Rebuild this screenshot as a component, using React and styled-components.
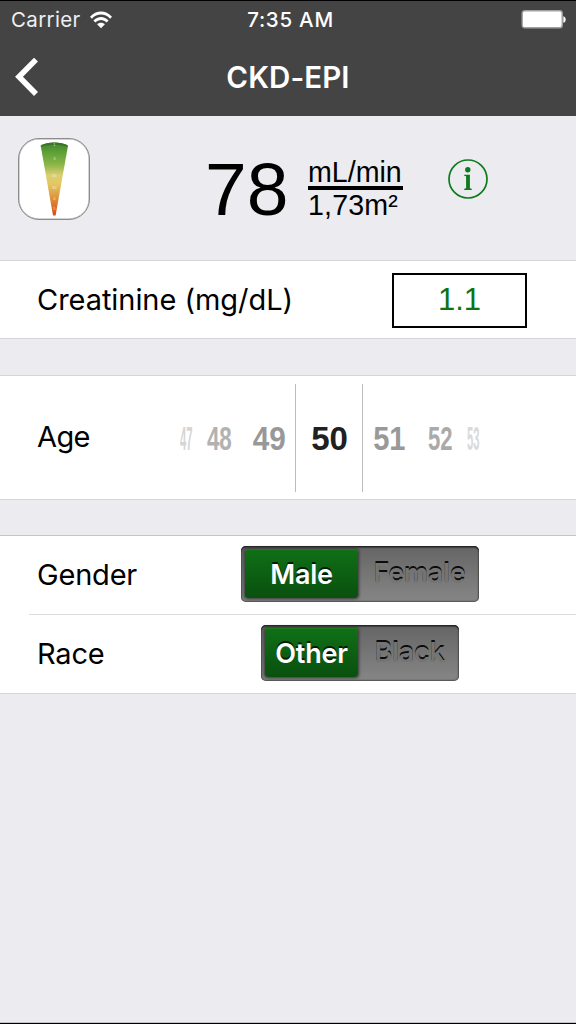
import React from 'react';
import styled, { createGlobalStyle } from 'styled-components';

const GlobalStyle = createGlobalStyle`
  * { box-sizing: border-box; }
  html, body { margin: 0; padding: 0; background: #ebebf0; }
`;

const Screen = styled.main`
  width: 576px;
  height: 1024px;
  display: flex;
  flex-direction: column;
  background: #ebebf0;
  border-bottom: 1px solid #000;
  box-shadow: inset 0 -1px 0 #c4c4c8;
  color: #000;
  font-family: Inter, "Liberation Sans", sans-serif;
  overflow: hidden;
`;

const Header = styled.header`
  height: 116px;
  flex: none;
  background: #444445;
  border-top: 1px solid #000;
  color: #fff;
`;

const StatusBar = styled.div`
  display: grid;
  grid-template-columns: 1fr auto 1fr;
  align-items: center;
  height: 37px;
  padding: 0 10px 0 11px;
  font-size: 20.5px;
  line-height: 37px;
`;

const Carrier = styled.div`
  display: flex;
  align-items: center;
  gap: 9px;
  color: #f0f0f0;
  letter-spacing: 0.35px;
`;

const Clock = styled.div`
  font-weight: 500;
  letter-spacing: 0.75px;
  padding-left: 4px;
`;

const Battery = styled.svg`
  justify-self: end;
  display: block;
`;

const NavBar = styled.nav`
  display: grid;
  grid-template-columns: 60px 1fr 60px;
  align-items: center;
  height: 78px;
`;

const BackButton = styled.button`
  border: 0;
  background: none;
  padding: 0 0 0 15px;
  height: 78px;
  display: flex;
  align-items: center;
`;

const Title = styled.h1`
  margin: 0;
  text-align: center;
  font-size: 29.5px;
  font-weight: 600;
  letter-spacing: 0.1px;
`;

const Summary = styled.section`
  display: flex;
  align-items: flex-start;
  height: 144px;
  flex: none;
  padding: 22px 0 0 18px;
  font-family: "Liberation Sans", Arial, sans-serif;
`;

const AppIcon = styled.div`
  width: 72px;
  height: 82px;
  border: 1px solid #8c8c8c;
  box-shadow: inset 0 0 0 0.5px #a8a8a8;
  border-radius: 21px;
  background: #fff;
  overflow: hidden;
`;

const Result = styled.output`
  margin: 9px 0 0 115px;
  width: 84px;
  font-size: 75px;
  line-height: 84px;
`;

const Unit = styled.div`
  margin: 18px 0 0 19px;
  width: 95px;
  display: flex;
  flex-direction: column;
  font-size: 28.6px;
  line-height: 32px;
  white-space: nowrap;
`;

const Numerator = styled.span`
  height: 34px;
  border-bottom: 4px solid #000;
  line-height: 32px;
`;

const Denominator = styled.span`
  height: 32px;
  line-height: 30px;
  letter-spacing: 0.15px;
`;

const InfoButton = styled.button`
  margin: 21px 0 0 45px;
  width: 40px;
  height: 40px;
  padding: 0;
  border: 0;
  background: none;
`;

const Group = styled.section`
  flex: none;
  margin-bottom: ${({ $gap }) => $gap || 0}px;
  background: #fff;
  border-top: 1px solid ${({ $edge }) => $edge || '#d6d6da'};
  border-bottom: 1px solid #d6d6da;
`;

const Row = styled.div`
  display: flex;
  align-items: center;
  height: ${({ $height }) => $height}px;
  padding-left: 37px;
`;

const Divider = styled.hr`
  margin: 0 0 0 29px;
  border: 0;
  height: 1px;
  background: #dcdcde;
`;

const Label = styled.label`
  margin-top: ${({ $top }) => $top ?? -1}px;
  font-size: 29px;
  line-height: 36px;
  letter-spacing: ${({ $spacing }) => $spacing || '-0.2px'};
  width: ${({ $width }) => $width}px;
  white-space: nowrap;
`;

const ValueField = styled.div`
  width: 135px;
  height: 55px;
  margin-top: 2px;
  border: 2px solid #000;
  color: #0d7415;
  text-align: center;
  font-family: "Liberation Sans", Arial, sans-serif;
  font-size: 31px;
  line-height: 50px;
`;

const Picker = styled.div`
  display: flex;
  align-items: center;
  height: 108px;
  font-family: "Liberation Sans", Arial, sans-serif;
  font-size: 33px;
  font-weight: 700;
`;

const PickerSlot = styled.div`
  flex: none;
  width: ${({ $width }) => $width}px;
  padding-left: ${({ $lead }) => $lead || 0}px;
  display: flex;
  justify-content: center;
  height: 108px;
  line-height: 110px;
  color: ${({ $tone }) => $tone};
  border: 0 solid #bcbcbc;
  border-width: ${({ $selected }) => ($selected ? '0 1.5px' : '0')};
`;

const Digits = styled.span`
  flex: none;
  transform: scaleX(${({ $squeeze }) => $squeeze});
`;

const Segmented = styled.div`
  display: flex;
  align-items: flex-start;
  width: ${({ $width }) => $width}px;
  height: 56px;
  margin-bottom: 2px;
  padding: 3px 3px 3px 4px;
  border-radius: 5px;
  background: linear-gradient(#656565, #868686);
  box-shadow: inset 0 1.5px 1px #242424, inset 0 0 1.5px 1px #505050;
  font-size: 27px;
`;

const ActiveSegment = styled.div`
  width: ${({ $width }) => $width}px;
  height: 49px;
  border-radius: 3px;
  background: linear-gradient(#107016, #09500f);
  box-shadow: 0 0 3px 1px #383838, inset 0 1px 0 #1d7b20;
  color: #fff;
  text-align: center;
  font-weight: 600;
  line-height: 51px;
  letter-spacing: -0.2px;
  text-shadow: 0 -2px 0.5px #001c03;
`;

const InactiveSegment = styled.div`
  flex: 1;
  height: 49px;
  padding-left: ${({ $offset }) => $offset || 0}px;
  text-align: center;
  line-height: 49px;
  font-weight: 600;
  letter-spacing: -0.3px;
  color: #747474;
  text-shadow: 0 -2px 0 #0c0c0c;
`;

const picker = [
  { value: 47, width: 25, tone: '#d6d6d6', squeeze: 0.34 },
  { value: 48, width: 41, tone: '#b2b2b2', squeeze: 0.68 },
  { value: 49, width: 55, tone: '#989898', squeeze: 0.9, lead: 4 },
  { value: 50, width: 68, tone: '#202020', squeeze: 1, selected: true, lead: 1 },
  { value: 51, width: 53, tone: '#999999', squeeze: 0.88 },
  { value: 52, width: 49, tone: '#aaaaaa', squeeze: 0.67 },
  { value: 53, width: 17, tone: '#dadada', squeeze: 0.34 },
];

function WifiIcon() {
  return (
    <svg width="22" height="18" viewBox="0 0 22 18" fill="#fff">
      <path d="M0 5.7C6.2-1.2 15.8-1.2 22 5.7L20.1 7.7C15 2.1 7 2.1 1.9 7.7Z" />
      <path d="M3.4 9.5C7.8 4.8 14.2 4.8 18.6 9.5L16.7 11.5C13.4 8.1 8.6 8.1 5.3 11.5Z" />
      <path d="M7.1 13.2C9.3 11.2 12.7 11.2 14.9 13.2L11 17.2Z" />
    </svg>
  );
}

function BatteryIcon() {
  return (
    <Battery width="45" height="19" viewBox="0 0 45 19">
      <rect x="1.2" y="0.8" width="40" height="17" rx="2.5" fill="#fff" stroke="#a1a1a1" strokeWidth="1.4" />
      <path d="M42.3 6.2C45.5 6.7 45.5 12.3 42.3 12.8Z" fill="#fff" />
    </Battery>
  );
}

function GaugeIcon() {
  const marks = [[4.5, 1], [18, 3], [35.3, 15], [47, 30], [58.5, 4], [68.5, 5]];
  return (
    <svg width="70" height="80" viewBox="0 0 70 80" style={{ display: 'block' }}>
      <defs>
        <linearGradient id="gauge" x1="0" y1="0" x2="0" y2="1">
          <stop offset="0" stopColor="#44832e" />
          <stop offset="0.13" stopColor="#5ba035" />
          <stop offset="0.3" stopColor="#8bb548" />
          <stop offset="0.45" stopColor="#dccf70" />
          <stop offset="0.57" stopColor="#e4c762" />
          <stop offset="0.75" stopColor="#dc963b" />
          <stop offset="1" stopColor="#d94b12" />
        </linearGradient>
      </defs>
      <path d="M21.7 6.7C28.5 2.4 42 2.4 49 6.7L36.6 76.5H34Z" fill="url(#gauge)" />
      <path d="M21.7 6.7C28.5 2.4 42 2.4 49 6.7L48.8 7.7C40.5 5 29.5 5 21.9 7.7Z" fill="#397429" />
      {marks.map(([y, n]) => (
        <text key={y} x="35.3" y={y + 2.5} fontSize="4" textAnchor="middle" fill="#fff" opacity="0.7">{n}</text>
      ))}
    </svg>
  );
}

function InfoIcon() {
  return (
    <svg width="40" height="40" viewBox="0 0 40 40" style={{ display: 'block' }}>
      <circle cx="20" cy="20" r="19" fill="none" stroke="#0d7a1c" strokeWidth="1.7" />
      <circle cx="19.8" cy="10.8" r="2.7" fill="#0d7a1c" />
      <path d="M16.2 15.7H21.9V29.2L23.7 29.8V31H16.2V29.8L18.1 29.2V17.3L16.2 16.8Z" fill="#0d7a1c" />
    </svg>
  );
}

export default function App() {
  return (
    <>
      <GlobalStyle />
      <Screen>
        <Header>
          <StatusBar>
            <Carrier>Carrier<WifiIcon /></Carrier>
            <Clock>7:35 AM</Clock>
            <BatteryIcon />
          </StatusBar>
          <NavBar>
            <BackButton aria-label="Back">
              <svg width="24" height="40" viewBox="0 0 24 40" fill="none" stroke="#fff" strokeWidth="5.6">
                <path d="M21 2.6L4 19.8L21 37" />
              </svg>
            </BackButton>
            <Title>CKD-EPI</Title>
          </NavBar>
        </Header>

        <Summary>
          <AppIcon><GaugeIcon /></AppIcon>
          <Result>78</Result>
          <Unit>
            <Numerator>mL/min</Numerator>
            <Denominator>1,73m²</Denominator>
          </Unit>
          <InfoButton aria-label="Information"><InfoIcon /></InfoButton>
        </Summary>

        <Group $gap={36}>
          <Row $height={77}>
            <Label $width={355} $spacing="-0.05px" $top={1}>Creatinine (mg/dL)</Label>
            <ValueField>1.1</ValueField>
          </Row>
        </Group>

        <Group $gap={35}>
          <Row $height={123}>
            <Label $width={137} $spacing="-0.6px">Age</Label>
            <Picker>
              {picker.map((item) => (
                <PickerSlot key={item.value} $width={item.width} $tone={item.tone} $lead={item.lead} $selected={item.selected}>
                  <Digits $squeeze={item.squeeze}>{item.value}</Digits>
                </PickerSlot>
              ))}
            </Picker>
          </Row>
        </Group>

        <Group $edge="#c4c4ca">
          <Row $height={78}>
            <Label $width={204}>Gender</Label>
            <Segmented $width={238}>
              <ActiveSegment $width={113}>Male</ActiveSegment>
              <InactiveSegment $offset={5}>Female</InactiveSegment>
            </Segmented>
          </Row>
          <Divider />
          <Row $height={78}>
            <Label $width={224}>Race</Label>
            <Segmented $width={198}>
              <ActiveSegment $width={93}>Other</ActiveSegment>
              <InactiveSegment $offset={5}>Black</InactiveSegment>
            </Segmented>
          </Row>
        </Group>
      </Screen>
    </>
  );
}
